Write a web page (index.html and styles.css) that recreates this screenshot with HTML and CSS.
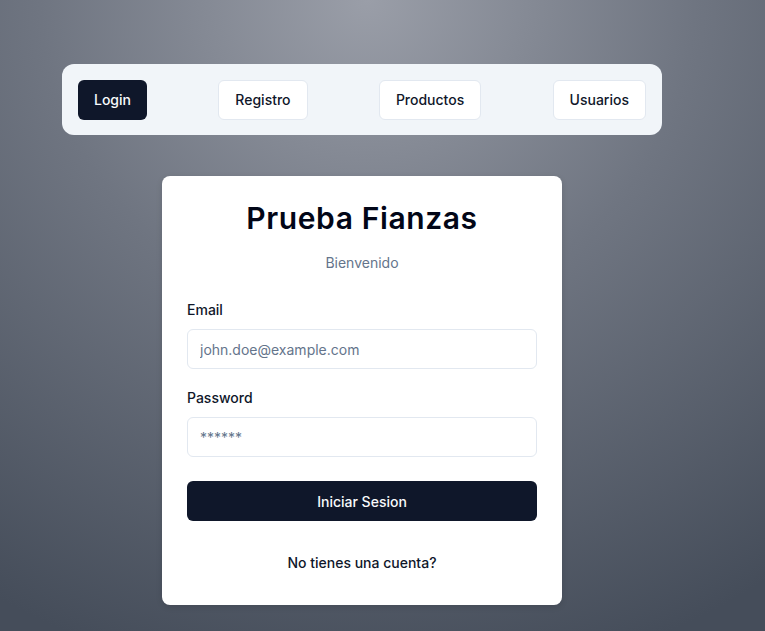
FILE: index.html
```html
<!DOCTYPE html>
<html lang="es">
<head>
<meta charset="utf-8">
<title>Prueba Fianzas</title>
<link rel="stylesheet" href="styles.css">
</head>
<body>
<div class="page">
  <nav class="nav">
    <button class="nav-btn active">Login</button>
    <button class="nav-btn">Registro</button>
    <button class="nav-btn">Productos</button>
    <button class="nav-btn">Usuarios</button>
  </nav>
  <div class="card">
    <h1 class="title">Prueba Fianzas</h1>
    <p class="subtitle">Bienvenido</p>
    <form class="form">
      <label class="label" for="email">Email</label>
      <input class="input" id="email" type="email" placeholder="john.doe@example.com">
      <label class="label label-gap" for="password">Password</label>
      <input class="input" id="password" type="password" placeholder="******">
      <button type="button" class="submit">Iniciar Sesion</button>
    </form>
    <p class="footer-link">No tienes una cuenta?</p>
  </div>
</div>
</body>
</html>
```
FILE: styles.css
```css
* { box-sizing: border-box; }
html, body { height: 100%; }
body {
  margin: 0;
  font-family: Inter, "Noto Sans", sans-serif;
  color: #0f172a;
  background: radial-gradient(ellipse 95% 110% at 48% 0%, #9a9ea8 0%, #6f7581 45%, #454d5a 100%);
  overflow: hidden;
}
.page {
  width: 600px;
  margin-left: 62px;
  padding-top: 64px;
}
.nav {
  display: flex;
  justify-content: space-between;
  align-items: center;
  background: #f1f5f9;
  border-radius: 12px;
  padding: 16px;
  height: 71px;
}
.nav-btn {
  font-family: Inter, sans-serif;
  font-size: 14px;
  font-weight: 500;
  height: 40px;
  padding: 0 16px;
  border-radius: 6px;
  border: 1px solid #e2e8f0;
  background: #ffffff;
  color: #0f172a;
}
.nav-btn.active {
  background: #0f172a;
  border: none;
  color: #f8fafc;
}
.card {
  width: 400px;
  margin: 41px auto 0;
  background: #ffffff;
  border-radius: 8px;
  padding: 24px 25px 32px;
  box-shadow: 0 2px 6px rgba(0,0,0,0.12);
}
.title {
  margin: 0;
  text-align: center;
  font-size: 30px;
  line-height: 36px;
  font-weight: 600;
  letter-spacing: 0.6px;
  color: #020617;
}
.subtitle {
  margin: 17px 0 0;
  text-align: center;
  font-size: 14px;
  line-height: 20px;
  color: #64748b;
}
.form {
  display: flex;
  flex-direction: column;
  margin-top: 27px;
}
.label {
  font-size: 14px;
  line-height: 20px;
  font-weight: 500;
  color: #0f172a;
  margin-bottom: 9px;
}
.label-gap { margin-top: 19px; }
.input {
  height: 40px;
  border: 1px solid #e2e8f0;
  border-radius: 6px;
  padding: 0 12px;
  font-family: Inter, sans-serif;
  font-size: 14px;
  color: #0f172a;
  outline: none;
}
.input::placeholder { color: #64748b; }
.submit {
  margin-top: 24px;
  height: 40px;
  border: none;
  border-radius: 6px;
  background: #0f172a;
  color: #f8fafc;
  font-family: Inter, sans-serif;
  font-size: 14px;
  font-weight: 500;
}
.footer-link {
  margin: 32px 0 0;
  text-align: center;
  font-size: 14px;
  line-height: 20px;
  font-weight: 500;
}
```
